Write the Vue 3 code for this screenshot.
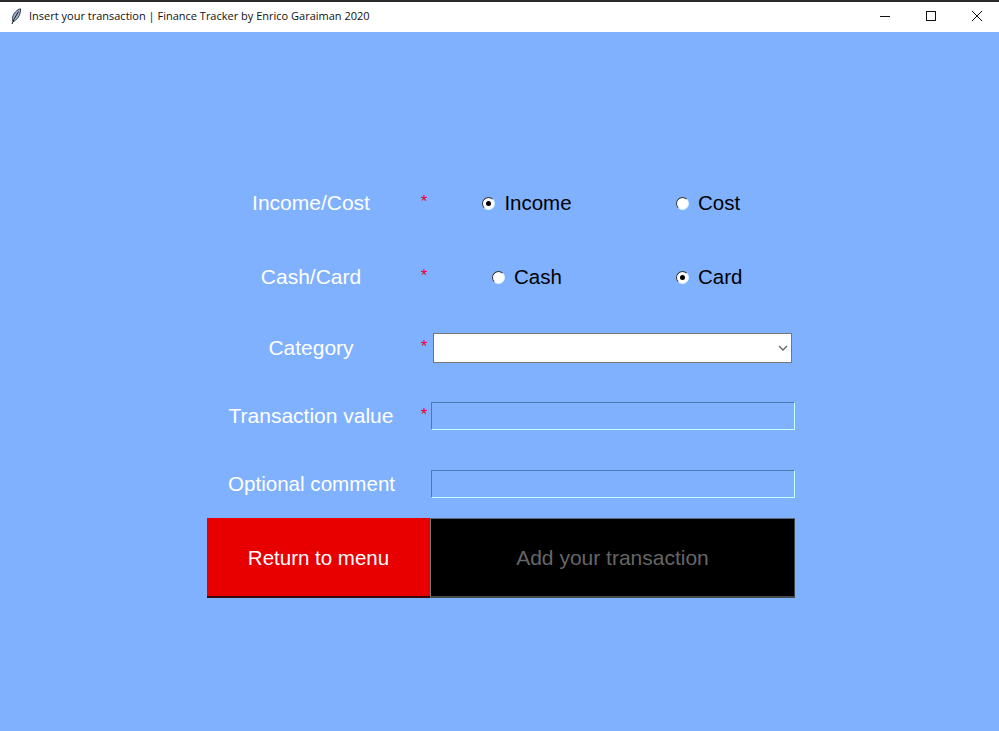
<script setup>
const radioRows = [
  { label: 'Income/Cost', options: [{ text: 'Income', on: true }, { text: 'Cost', on: false }] },
  { label: 'Cash/Card', options: [{ text: 'Cash', on: false }, { text: 'Card', on: true }] },
]
</script>

<template>
  <div class="window">
    <header class="titlebar">
      <svg class="feather" width="12" height="17" viewBox="0 0 12 17">
        <path d="M10.5 0.8C7 1.6 3.6 5 2.6 9.2C2.2 11 2.4 12.6 3 13.6C6.4 12.6 9.4 8.6 10.2 4.6C10.5 3 10.7 1.8 10.5 0.8Z" fill="#9fb0c8" stroke="#1e2a3a" stroke-width="0.900" />
        <path d="M8.500 3.500L3.800 11.500L2 16" fill="none" stroke="#10151c" stroke-width="1" />
      </svg>
      <span class="title">Insert your transaction | Finance Tracker by Enrico Garaiman 2020</span>
      <div class="controls">
        <span class="control"><svg width="12" height="12" viewBox="0 0 12 12"><path d="M1 6.500H11" stroke="#111" stroke-width="1" /></svg></span>
        <span class="control"><svg width="12" height="12" viewBox="0 0 12 12"><rect x="1.500" y="1.500" width="9" height="9" fill="none" stroke="#111" /></svg></span>
        <span class="control last"><svg width="12" height="12" viewBox="0 0 12 12"><path d="M1 1L11 11M11 1L1 11" stroke="#111" stroke-width="1" /></svg></span>
      </div>
    </header>

    <main class="main">
      <form class="form" @submit.prevent>
        <div v-for="row in radioRows" :key="row.label" class="row radio-row">
          <span class="label">{{ row.label }}</span>
          <span class="star">*</span>
          <div class="options">
            <label v-for="opt in row.options" :key="opt.text" class="option">
              <span class="radio" :class="{ on: opt.on }"></span>
              <span>{{ opt.text }}</span>
            </label>
          </div>
        </div>

        <div class="row">
          <span class="label">Category</span>
          <span class="star low">*</span>
          <div class="select">
            <svg width="10" height="6" viewBox="0 0 10 6"><path d="M1 1L5 5L9 1" fill="none" stroke="#666" stroke-width="1.300" /></svg>
          </div>
        </div>

        <div class="row">
          <span class="label">Transaction value</span>
          <span class="star low">*</span>
          <input class="field" type="text" />
        </div>

        <div class="row">
          <span class="label comment">Optional comment</span>
          <span class="star"></span>
          <input class="field" type="text" />
        </div>

        <div class="buttons">
          <button class="btn back" type="button">Return to menu</button>
          <button class="btn add" type="button">Add your transaction</button>
        </div>
      </form>
    </main>
  </div>
</template>

<style>
html, body { margin: 0; background: #80b1ff; }
</style>

<style scoped>
.window {
  width: 999px;
  height: 731px;
  display: flex;
  flex-direction: column;
  overflow: hidden;
  background: #80b1ff;
  font-family: "Liberation Sans", Arial, sans-serif;
}
.titlebar {
  height: 30px;
  flex: none;
  display: flex;
  align-items: center;
  background: #fff;
  border-top: 2px solid #2a2a2a;
}
.feather { margin-left: 10px; margin-right: 7px; margin-bottom: 2px; }
.title {
  font-family: "Open Sans", "Noto Sans", sans-serif;
  font-size: 11px;
  line-height: 14px;
  padding-bottom: 2px;
  color: #111;
  white-space: nowrap;
}
.controls { margin-left: auto; display: flex; }
.control {
  width: 46px;
  height: 30px;
  padding-bottom: 2px;
  box-sizing: border-box;
  display: flex;
  align-items: center;
  justify-content: center;
}
.control.last { width: 45px; }
.main { flex: 1; padding: 134px 0 0 207px; }
.form { width: 588px; display: flex; flex-direction: column; }
.row {
  height: 68px;
  display: grid;
  grid-template-columns: 208px 16px 364px;
  align-items: center;
}
.radio-row { height: 74px; }
.label {
  text-align: center;
  color: #fff;
  font-size: 21px;
}
.comment { padding-left: 1px; font-size: 20.600px; }
.star {
  color: #e8002a;
  font-size: 17px;
  text-align: center;
  transform: translate(1px, -1px);
}
.star.low { transform: translate(1px, -1px); }
.options {
  display: grid;
  grid-template-columns: 192px 172px;
}
.option {
  display: flex;
  align-items: center;
  justify-content: center;
  gap: 9px;
  color: #000;
  font-size: 20.500px;
}
.option:nth-child(2) {
  justify-content: flex-start;
  padding-left: 53px;
}
.radio {
  width: 13px;
  height: 13px;
  box-sizing: border-box;
  border-radius: 50%;
  background: #fff;
  border: 1px solid;
  border-color: #333 #d8f4ff #d8f4ff #333;
  display: flex;
  align-items: center;
  justify-content: center;
}
.radio.on::after {
  content: "";
  width: 5px;
  height: 5px;
  border-radius: 50%;
  background: #000;
}
.select {
  width: 359px;
  height: 30px;
  box-sizing: border-box;
  margin-left: 2px;
  background: #fff;
  border: 1px solid #767676;
  display: flex;
  align-items: center;
  justify-content: flex-end;
  padding-right: 3px;
}
.field {
  width: 364px;
  height: 28px;
  box-sizing: border-box;
  margin: 0;
  padding: 0;
  background: transparent;
  border: 1px solid;
  border-color: #4a78b4 #c8ffff #c8ffff #4a78b4;
  outline: none;
}
.buttons { display: flex; height: 80px; }
.btn {
  margin: 0;
  padding: 0;
  height: 80px;
  font-family: inherit;
  box-sizing: border-box;
}
.back {
  width: 223px;
  padding-top: 2px;
  font-size: 20.500px;
  background: #e80000;
  color: #fff;
  border: none;
  border-bottom: 2px solid #3a0a0a;
}
.add {
  width: 365px;
  font-size: 21px;
  background: #000;
  color: #666;
  border: 1px solid #444;
  border-top-color: #5c6a80;
  border-left-color: #7a7a7a;
  border-bottom: 2px solid #4a4a4a;
}
</style>
